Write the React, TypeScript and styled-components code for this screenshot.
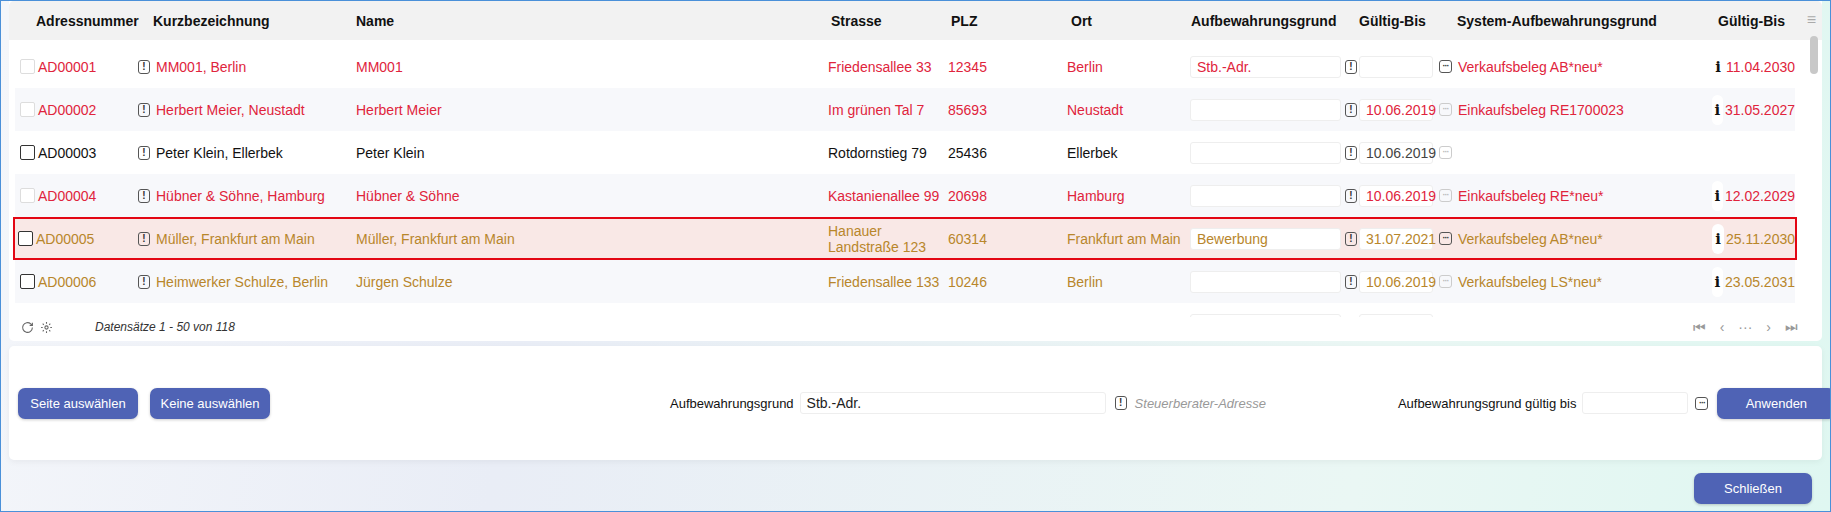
import React from "react";
import styled, { createGlobalStyle } from "styled-components";

const Global = createGlobalStyle`
  html, body { margin: 0; padding: 0; }
  body { font-family: "Liberation Sans", Arial, sans-serif; font-size: 14px; }
`;

const Page = styled.div`
  width: 1831px; height: 512px; box-sizing: border-box;
  border: 1px solid #4a90d9;
  background: linear-gradient(100deg, #f4f6fa 0%, #e9edf6 30%, #eaf7f4 75%, #dff7f1 100%);
  display: flex; flex-direction: column; padding: 0 8px; overflow: hidden;
`;
const GridPanel = styled.div`
  background: #fff; height: 340px; display: flex; flex-direction: column;
  border-radius: 0 0 5px 5px; position: relative;
`;
const Cols = "118px 218px 472px 121px 119px 122px 170px 79px 270px 91px";
const Header = styled.div`
  height: 39px; background: #f2f2f2; display: grid; grid-template-columns: 6px ${Cols} 1fr;
  align-items: center; font-weight: bold; color: #111; border-radius: 5px 5px 0 0;
`;
const HCell = styled.div<{ $pl?: number; $right?: boolean }>`
  padding-left: ${p => p.$pl ?? 0}px; text-align: ${p => (p.$right ? "right" : "left")};
  padding-right: ${p => (p.$right ? 10 : 0)}px; white-space: nowrap;
`;
const Body = styled.div`
  flex: 1; overflow: hidden; position: relative; padding-top: 5px;
`;
const Row = styled.div<{ $alt?: boolean; $sel?: boolean; $c: string }>`
  height: 43px; box-sizing: border-box; display: grid; grid-template-columns: ${Cols};
  align-items: center; margin-left: 6px; width: 1780px; color: ${p => p.$c};
  background: ${p => (p.$sel ? "#f9e8e6" : p.$alt ? "#f7f8fb" : "#fff")};
  border: ${p => (p.$sel ? "2px solid #e30613" : "none")};
  margin-left: ${p => (p.$sel ? "4px" : "6px")};
  width: ${p => (p.$sel ? "1784px" : "1780px")};
  padding-left: ${p => (p.$sel ? "0" : "0")};
`;
const Cell = styled.div<{ $gap?: number; $pl?: number }>`
  display: flex; align-items: center; gap: ${p => p.$gap ?? 4}px; line-height: 16px;
  padding-left: ${p => p.$pl ?? 5}px;
`;
const Check = styled.span<{ $dis?: boolean }>`
  width: 13px; height: 13px; border: 1px solid ${p => (p.$dis ? "#ddd" : "#333")};
  border-radius: 2px; background: #fff; margin-right: 3px; flex: none;
`;
const Excl = styled.span`
  width: 10px; height: 12px; border: 1.5px solid #555; border-radius: 3px; color: #333;
  font-size: 10px; font-weight: bold; display: inline-flex; align-items: center; justify-content: center;
  line-height: 1; flex: none;
`;
const Dots = styled.span<{ $dark?: boolean }>`
  width: 11px; height: 11px; border: 1.5px solid ${p => (p.$dark ? "#555" : "#ccc")}; border-radius: 3px;
  color: ${p => (p.$dark ? "#333" : "#bbb")}; font-size: 9px; font-weight: bold; display: inline-flex; align-items: center;
  justify-content: center; line-height: 1; flex: none; letter-spacing: -1px;
`;
const InfoI = styled.span`
  width: 16px; height: 30px; background: #fff; border-radius: 8px; display: inline-flex; align-items: center;
  justify-content: center; font-family: "DejaVu Serif", serif; font-weight: bold; color: #111; font-size: 15px;
`;
const Input = styled.div<{ $w: number; $c?: string }>`
  width: ${p => p.$w}px; height: 22px; box-sizing: border-box; background: #fff; border: 1px solid #eee;
  border-radius: 3px; padding-left: 6px; display: flex; align-items: center; color: ${p => p.$c ?? "#222"};
  flex: none;
`;
const Footer = styled.div`
  height: 20px; display: flex; align-items: center; padding: 0 10px 4px 12px; color: #666; gap: 6px;
`;
const Info = styled.span`font-style: italic; font-size: 12px; color: #333; margin-left: 36px;`;
const Pager = styled.div`margin-left: auto; display: flex; gap: 14px; align-items: center; color: #999; margin-right: 14px; font-size: 14px;`;
const Scroll = styled.div`
  position: absolute; right: 4px; top: 35px; width: 8px; height: 38px; background: #c8c8c8; border-radius: 4px;
`;
const Menu = styled.div`position: absolute; right: 6px; top: 10px; color: #aaa; font-size: 16px;`;

const FormPanel = styled.div`
  margin-top: 5px; height: 114px; background: #fff; border-radius: 5px; box-shadow: 0 2px 6px rgba(0,0,0,0.05);
  display: flex; align-items: center; padding: 0 9px;
`;
const Btn = styled.button<{ $w: number }>`
  width: ${p => p.$w}px; height: 31px; background: #4f63b5; color: #fff; border: none; border-radius: 7px;
  font-family: inherit; font-size: 13px; box-shadow: 0 1px 3px rgba(0,0,0,0.2); flex: none; white-space: nowrap;
`;
const Label = styled.span`color: #111; margin-right: 6px; font-size: 13px; white-space: nowrap;`;
const Hint = styled.span`color: #999; font-style: italic; margin-left: 8px; font-size: 13px; white-space: nowrap;`;
const Spacer = styled.div<{ $w: number }>`width: ${p => p.$w}px; flex: none;`;
const BottomBar = styled.div`
  flex: 1; display: flex; justify-content: flex-end; align-items: center; padding-right: 10px; padding-top: 6px;
`;

const RED = "#e0243c", GOLD = "#b8862b", BLK = "#111";

type R = {
  id: string; kurz: string; name: string; str: string; plz: string; ort: string;
  grund: string; gc?: string; date: string; dc: string; dots: boolean; sys: string; end: string; c: string; dis?: boolean; sel?: boolean;
};
const rows: R[] = [
  { id: "AD00001", kurz: "MM001, Berlin", name: "MM001", str: "Friedensallee 33", plz: "12345", ort: "Berlin", grund: "Stb.-Adr.", gc: RED, date: "", dc: RED, dots: true, sys: "Verkaufsbeleg AB*neu*", end: "11.04.2030", c: RED, dis: true },
  { id: "AD00002", kurz: "Herbert Meier, Neustadt", name: "Herbert Meier", str: "Im grünen Tal 7", plz: "85693", ort: "Neustadt", grund: "", date: "10.06.2019", dc: RED, dots: false, sys: "Einkaufsbeleg RE1700023", end: "31.05.2027", c: RED, dis: true },
  { id: "AD00003", kurz: "Peter Klein, Ellerbek", name: "Peter Klein", str: "Rotdornstieg 79", plz: "25436", ort: "Ellerbek", grund: "", date: "10.06.2019", dc: "#444", dots: false, sys: "", end: "", c: BLK },
  { id: "AD00004", kurz: "Hübner & Söhne, Hamburg", name: "Hübner & Söhne", str: "Kastanienallee 99", plz: "20698", ort: "Hamburg", grund: "", date: "10.06.2019", dc: RED, dots: false, sys: "Einkaufsbeleg RE*neu*", end: "12.02.2029", c: RED, dis: true },
  { id: "AD00005", kurz: "Müller, Frankfurt am Main", name: "Müller, Frankfurt am Main", str: "Hanauer Landstraße 123", plz: "60314", ort: "Frankfurt am Main", grund: "Bewerbung", gc: GOLD, date: "31.07.2021", dc: GOLD, dots: true, sys: "Verkaufsbeleg AB*neu*", end: "25.11.2030", c: GOLD, sel: true },
  { id: "AD00006", kurz: "Heimwerker Schulze, Berlin", name: "Jürgen Schulze", str: "Friedensallee 133", plz: "10246", ort: "Berlin", grund: "", date: "10.06.2019", dc: GOLD, dots: false, sys: "Verkaufsbeleg LS*neu*", end: "23.05.2031", c: GOLD },
  { id: "AD00007", kurz: "Gartencenter Hinterhofer, Wien", name: "Gartencenter Hinterhofer", str: "Mozartgasse 6", plz: "1110", ort: "Wien", grund: "", date: "00.00.2019", dc: GOLD, dots: false, sys: "Verkaufsbeleg LS3000023", end: "26.10.2026", c: GOLD },
];

export default function App() {
  return (
    <>
      <Global />
      <Page>
        <GridPanel>
          <Header>
            <div />
            <HCell $pl={21}>Adressnummer</HCell>
            <HCell $pl={20}>Kurzbezeichnung</HCell>
            <HCell $pl={5}>Name</HCell>
            <HCell $pl={8}>Strasse</HCell>
            <HCell $pl={7}>PLZ</HCell>
            <HCell $pl={8}>Ort</HCell>
            <HCell $pl={6}>Aufbewahrungsgrund</HCell>
            <HCell $pl={4}>Gültig-Bis</HCell>
            <HCell $pl={23}>System-Aufbewahrungsgrund</HCell>
            <HCell $right>Gültig-Bis</HCell>
          </Header>
          <Menu>≡</Menu>
          <Body>
            {rows.map((r, i) => (
              <Row key={r.id} $alt={i % 2 === 1} $sel={r.sel} $c={r.c}>
                <Cell $gap={0} $pl={r.sel ? 3 : 5}><Check $dis={r.dis} />{r.id}</Cell>
                <Cell $gap={6}><Excl>!</Excl>{r.kurz}</Cell>
                <Cell>{r.name}</Cell>
                <Cell>{r.str}</Cell>
                <Cell $pl={4}>{r.plz}</Cell>
                <Cell $pl={4}>{r.ort}</Cell>
                <Cell $gap={4}><Input $w={151} $c={r.gc}>{r.grund}</Input><Excl>!</Excl></Cell>
                <Cell $pl={4}><Input $w={74} $c={r.dc}>{r.date}</Input></Cell>
                <Cell $gap={6}><Dots $dark={r.dots}>···</Dots>{r.sys}</Cell>
                <Cell $gap={2} $pl={8}>{r.end && <><InfoI>i</InfoI>{r.end}</>}</Cell>
              </Row>
            ))}
          </Body>
          <Scroll />
          <Footer>
            <svg width="13" height="13" viewBox="0 0 24 24" fill="none" stroke="#666" strokeWidth="2"><path d="M21 12a9 9 0 1 1-3-6.7L21 8" /><path d="M21 3v5h-5" /></svg>
            <svg width="13" height="13" viewBox="0 0 24 24" fill="none" stroke="#666" strokeWidth="2"><circle cx="12" cy="12" r="3" /><path d="M12 2v3M12 19v3M2 12h3M19 12h3M5 5l2 2M17 17l2 2M5 19l2-2M17 7l2-2" /></svg>
            <Info>Datensätze 1 - 50 von 118</Info>
            <Pager>
              <span>⏮</span><span>‹</span><span>···</span><span>›</span><span>⏭</span>
            </Pager>
          </Footer>
        </GridPanel>
        <FormPanel>
          <Btn $w={120}>Seite auswählen</Btn>
          <Spacer $w={12} />
          <Btn $w={120}>Keine auswählen</Btn>
          <Spacer $w={400} />
          <Label>Aufbewahrungsgrund</Label>
          <Input $w={306}>Stb.-Adr.</Input>
          <Spacer $w={9} />
          <Excl>!</Excl>
          <Hint>Steuerberater-Adresse</Hint>
          <Spacer $w={132} />
          <Label>Aufbewahrungsgrund gültig bis</Label>
          <Input $w={106} />
          <Spacer $w={7} />
          <Dots $dark>···</Dots>
          <Spacer $w={9} />
          <Btn $w={118}>Anwenden</Btn>
        </FormPanel>
        <BottomBar>
          <Btn $w={118}>Schließen</Btn>
        </BottomBar>
      </Page>
    </>
  );
}
